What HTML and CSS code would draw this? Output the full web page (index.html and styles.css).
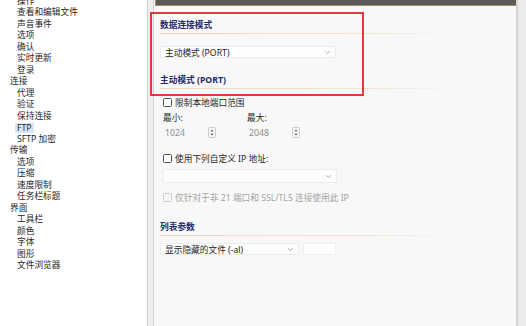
FILE: index.html
```html
<!DOCTYPE html>
<html lang="zh-CN">
<head>
<meta charset="utf-8">
<title>FTP 设置</title>
<link rel="stylesheet" href="styles.css">
</head>
<body>
<div class="app">
  <nav class="tree">
    <ul>
      <li class="c">操作</li>
      <li class="c">查看和编辑文件</li>
      <li class="c">声音事件</li>
      <li class="c">选项</li>
      <li class="c">确认</li>
      <li class="c">实时更新</li>
      <li class="c">登录</li>
      <li>连接</li>
      <li class="c">代理</li>
      <li class="c">验证</li>
      <li class="c">保持连接</li>
      <li class="c"><span class="sel">FTP</span></li>
      <li class="c">SFTP 加密</li>
      <li>传输</li>
      <li class="c">选项</li>
      <li class="c">压缩</li>
      <li class="c">速度限制</li>
      <li class="c">任务栏标题</li>
      <li>界面</li>
      <li class="c">工具栏</li>
      <li class="c">颜色</li>
      <li class="c">字体</li>
      <li class="c">图形</li>
      <li class="c">文件浏览器</li>
    </ul>
  </nav>
  <div class="gutter"></div>
  <main class="panel">
    <div class="banner"></div>
    <div class="content">
      <h2 class="sec s-mode">数据连接模式</h2>
      <div class="select s1">
        <span>主动模式 (PORT)</span>
        <svg class="chev" width="5" height="3" viewBox="0 0 5 3"><path d="M0.3 0.3 L2.5 2.6 L4.7 0.3" fill="none" stroke="#9a9a9a" stroke-width="0.8"/></svg>
      </div>
      <h2 class="sec s-port">主动模式 (PORT)</h2>
      <label class="check r1"><span class="box"></span>限制本地端口范围</label>
      <div class="range">
        <div class="field">
          <div class="lbl">最小:</div>
          <div class="spin"><span>1024</span>
            <svg width="8" height="11" viewBox="0 0 8 11"><rect x="0.5" y="0.5" width="7" height="10" rx="1" fill="#f4f4f4" stroke="#cdcdcd"/><path d="M2.6 4.3 L4 2.7 L5.4 4.3 Z M2.6 6.7 L4 8.3 L5.4 6.7 Z" fill="#333"/></svg>
          </div>
        </div>
        <div class="field">
          <div class="lbl">最大:</div>
          <div class="spin"><span>2048</span>
            <svg width="8" height="11" viewBox="0 0 8 11"><rect x="0.5" y="0.5" width="7" height="10" rx="1" fill="#f4f4f4" stroke="#cdcdcd"/><path d="M2.6 4.3 L4 2.7 L5.4 4.3 Z M2.6 6.7 L4 8.3 L5.4 6.7 Z" fill="#333"/></svg>
          </div>
        </div>
      </div>
      <label class="check r2"><span class="box"></span>使用下列自定义 IP 地址:</label>
      <div class="select combo">
        <span></span>
        <svg class="chev" width="5" height="3" viewBox="0 0 5 3"><path d="M0.3 0.3 L2.5 2.6 L4.7 0.3" fill="none" stroke="#9a9a9a" stroke-width="0.8"/></svg>
      </div>
      <label class="check disabled r3"><span class="box"></span>仅针对于非 21 端口和 SSL/TLS 连接使用此 IP</label>
      <h2 class="sec s-list">列表参数</h2>
      <div class="list-row">
        <div class="select s3">
          <span>显示隐藏的文件 (-al)</span>
          <svg class="chev" width="5" height="3" viewBox="0 0 5 3"><path d="M0.3 0.3 L2.5 2.6 L4.7 0.3" fill="none" stroke="#9a9a9a" stroke-width="0.8"/></svg>
        </div>
        <div class="blank"></div>
      </div>
    </div>
  </main>
  <div class="scroll"></div>
  <div class="annot"></div>
</div>
</body>
</html>
```

FILE: styles.css
```css
html, body {
  margin: 0;
  padding: 0;
}
body {
  width: 526px;
  height: 326px;
  overflow: hidden;
  font-family: "Noto Sans", "Noto Sans CJK SC", sans-serif;
  font-size: 8.7px;
  color: #262626;
  background: #f0f0f0;
}
.app {
  position: relative;
  display: flex;
  height: 326px;
}
.tree {
  width: 147px;
  flex: none;
  background: #fff;
  border-right: 1px solid #cfcfcf;
  overflow: hidden;
}
.tree ul {
  list-style: none;
  margin: -4.5px 0 0;
  padding: 0;
}
.tree li {
  height: 11.5px;
  line-height: 11.5px;
  padding-left: 10px;
  white-space: nowrap;
}
.tree li.c {
  padding-left: 17px;
}
.tree .sel {
  display: inline-block;
  margin-left: -2px;
  padding: 0 2px;
  line-height: 10px;
  background: #d8e7f7;
  vertical-align: middle;
}
.gutter {
  width: 5px;
  flex: none;
  background: #eeeeee;
}
.panel {
  flex: 1;
  background: #f8f8f8;
  border-left: 1px solid #d6d6d6;
  border-right: 1px solid #d9d9d9;
}
.banner {
  height: 5px;
  margin-left: 1px;
  background: #5c5b5a;
  border: 1px solid #a08a69;
  border-top: 0;
  border-right: 0;
}
.content {
  padding-left: 6px;
}
.sec {
  margin: 0;
  width: 340px;
  font-size: 8.7px;
  font-weight: bold;
  color: #1f2b6b;
  line-height: 12px;
  padding-bottom: 3px;
  background: linear-gradient(to right, #eed6b8 0%, #f3e3cf 65%, rgba(243, 227, 207, 0) 100%) left bottom / 305px 1px no-repeat;
}
.s-mode { margin-top: 13px; }
.s-port { margin-top: 15.5px; }
.s-list { margin-top: 17px; }

.select {
  display: flex;
  align-items: center;
  justify-content: space-between;
  box-sizing: border-box;
  background: #fdfdfd;
  border: 1px solid #ebebeb;
  border-radius: 1px;
  padding: 0 5px 0 4px;
  white-space: nowrap;
}
.s1 {
  width: 176px;
  height: 12px;
  margin-top: 12px;
}
.combo {
  width: 174px;
  height: 14px;
  margin: 5px 0 0 3px;
}
.s3 {
  width: 139px;
  height: 12px;
}
.chev { flex: none; }

.check {
  display: flex;
  align-items: center;
  height: 12px;
  margin-left: 3px;
  white-space: nowrap;
}
.check .box {
  width: 9px;
  height: 9px;
  box-sizing: border-box;
  border: 1px solid #4d4d4d;
  border-radius: 1.5px;
  background: #fff;
  margin-right: 3px;
  flex: none;
}
.check.disabled {
  color: #a3a3a3;
}
.check.disabled .box {
  border-color: #cccccc;
  background: #f7f7f7;
}
.r1 { margin-top: 8.3px; }
.r2 { margin-top: 13.7px; }
.r3 { margin-top: 8.3px; }

.range {
  display: flex;
  margin: 3px 0 0 3px;
}
.field {
  width: 84px;
  display: flex;
  flex-direction: column;
  gap: 3px;
}
.lbl {
  height: 12px;
  line-height: 12px;
}
.spin {
  display: flex;
  align-items: center;
  width: 53px;
  height: 12px;
  gap: 0;
}
.spin span {
  width: 45px;
  padding-left: 2px;
  box-sizing: border-box;
  color: #8c8c8c;
}

.list-row {
  display: flex;
  gap: 4px;
  margin-top: 7.7px;
}
.blank {
  width: 33px;
  height: 12px;
  background: #ffffff;
  border: 1px solid #f1f1f1;
  box-sizing: border-box;
}

.scroll {
  width: 8px;
  flex: none;
  background: #ebebeb;
  border-left: 1px solid #d2d2d2;
}
.annot {
  position: absolute;
  left: 150px;
  top: 12px;
  width: 214px;
  height: 84px;
  box-sizing: border-box;
  border: 2px solid #e2393c;
  pointer-events: none;
}
```
